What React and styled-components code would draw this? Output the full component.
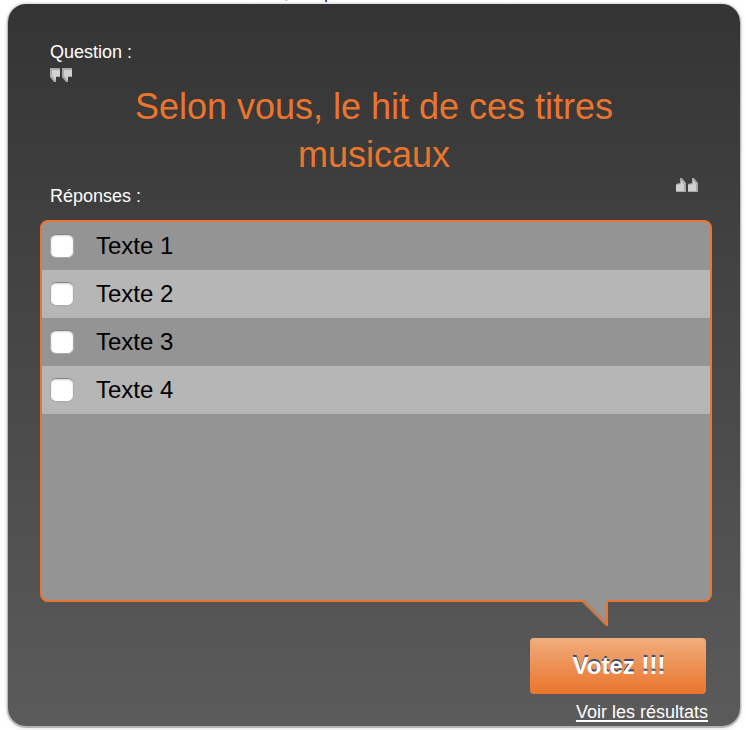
import React, { useState } from "react";
import styled, { createGlobalStyle } from "styled-components";

const GlobalStyle = createGlobalStyle`
  * {
    box-sizing: border-box;
  }
  body {
    margin: 0;
    background-color: #fff;
    font-family: "Liberation Sans", Arial, Helvetica, sans-serif;
    overflow: hidden;
  }
`;

const Page = styled.main`
  height: 730px;
  overflow: hidden;
`;

const Intro = styled.div`
  height: 4px;
  padding-left: 284px;
  overflow: hidden;
  color: #222;
  font-size: 18px;
  line-height: 18px;
  word-spacing: 30px;

  span {
    display: block;
    margin-top: -17px;
  }
`;

const Card = styled.section`
  width: 732px;
  height: 722px;
  margin-left: 8px;
  padding: 36px 28px 0 32px;
  display: flex;
  flex-direction: column;
  border-radius: 18px;
  background: linear-gradient(#343434, #5b5b5b);
  box-shadow: 0 1px 1px 1px rgba(0, 0, 0, 0.2), 0 0 0 2px rgba(0, 0, 0, 0.06),
    0 2px 6px rgba(0, 0, 0, 0.12);
`;

const Label = styled.div`
  padding-left: 10px;
  color: #fff;
  font-size: 18px;
  line-height: 24px;
`;

const QuoteMark = styled.svg`
  display: block;
  width: 22px;
  height: 14px;
  flex: none;
  margin: ${(props) => (props.$closing ? "-1px 14px 0 auto" : "4px 0 0 10px")};
`;

const Title = styled.h1`
  width: 540px;
  margin: 1px 0 0 64px;
  color: #ec752d;
  font-size: 36px;
  font-weight: 400;
  line-height: 48px;
  text-align: center;
`;

const AnswersHead = styled.div`
  height: 41px;
  display: flex;
  align-items: flex-start;
  justify-content: space-between;

  ${Label} {
    padding-top: 5px;
  }
`;

const Answers = styled.div`
  position: relative;
  width: 672px;
  height: 382px;
  border: 2px solid #ec752d;
  border-radius: 8px;
  background-color: #949494;
`;

const Answer = styled.label`
  height: 48px;
  padding-left: 8px;
  display: flex;
  align-items: center;
  gap: 22px;
  background-color: ${(props) => (props.$light ? "#b6b6b6" : "transparent")};
  color: #000;
  font-size: 24px;
`;

const Checkbox = styled.input`
  appearance: none;
  width: 24px;
  height: 24px;
  margin: 0;
  border: 1px solid #a9a9a9;
  border-top-color: #858585;
  border-radius: 6px;
  background-color: #fff;
  box-shadow: inset 0 1px 2px rgba(0, 0, 0, 0.18);

  &:checked {
    background-color: #ec752d;
  }
`;

const Tail = styled.svg`
  position: absolute;
  right: 102px;
  bottom: -26px;
  width: 26px;
  height: 26px;
`;

const Footer = styled.div`
  padding-top: 36px;
  display: flex;
  flex-direction: column;
  align-items: flex-end;
`;

const VoteButton = styled.button`
  width: 176px;
  height: 56px;
  margin-right: 6px;
  padding: 0 0 0 2px;
  border: none;
  border-radius: 4px;
  background: linear-gradient(#f0ad7d, #ea742c);
  color: #fff;
  font-family: inherit;
  font-size: 24px;
  font-weight: 700;
  text-shadow: 0 -2px 0 #3e4a6b;
`;

const ResultsLink = styled.a`
  margin: 6px 4px 0 0;
  color: #fff;
  font-size: 18px;
  line-height: 24px;
  text-decoration: underline;
  text-decoration-thickness: 2px;
  text-decoration-skip-ink: none;
  text-underline-offset: 2px;
`;

const answers = ["Texte 1", "Texte 2", "Texte 3", "Texte 4"];

const Quote = ({ closing }) => (
  <QuoteMark $closing={closing} viewBox="0 0 22 14" aria-hidden="true">
    {[0, 12].map((x) => (
      <g key={x} transform={`translate(${x} 0)`}>
        {closing ? (
          <>
            <path d="M0 14H10V5L6 0H4V5L0 6Z" fill="#a8a8a8" />
            <path d="M0 13H8V6L6 3H5V6L1 7H0Z" fill="#d0d0d0" />
          </>
        ) : (
          <>
            <path d="M0 0H10V9H6V14H4L0 9Z" fill="#a8a8a8" />
            <path d="M2 2H10V8H6V12H5L2 8Z" fill="#d0d0d0" />
          </>
        )}
      </g>
    ))}
  </QuoteMark>
);

const Poll = () => {
  const [checked, setChecked] = useState([]);

  const toggle = (answer) => {
    setChecked(
      checked.includes(answer)
        ? checked.filter((item) => item !== answer)
        : [...checked, answer]
    );
  };

  return (
    <Card>
      <Label>Question :</Label>
      <Quote />
      <Title>Selon vous, le hit de ces titres musicaux</Title>
      <AnswersHead>
        <Label>Réponses :</Label>
        <Quote closing />
      </AnswersHead>
      <Answers>
        {answers.map((answer, idx) => (
          <Answer key={answer} $light={idx % 2 === 1}>
            <Checkbox
              type="checkbox"
              checked={checked.includes(answer)}
              onChange={() => toggle(answer)}
            />
            {answer}
          </Answer>
        ))}
        <Tail viewBox="0 0 26 26" aria-hidden="true">
          <path d="M0 0H26V26Z" fill="#949494" />
          <path d="M1 1L25 25" stroke="#c57a4b" strokeWidth="3" />
          <path d="M25 2V26" stroke="#ec752d" strokeWidth="2" />
        </Tail>
      </Answers>
      <Footer>
        <VoteButton type="button">Votez !!!</VoteButton>
        <ResultsLink href="#resultats">Voir les résultats</ResultsLink>
      </Footer>
    </Card>
  );
};

const App = () => (
  <Page>
    <GlobalStyle />
    <Intro>
      <span>, p</span>
    </Intro>
    <Poll />
  </Page>
);

export default App;
